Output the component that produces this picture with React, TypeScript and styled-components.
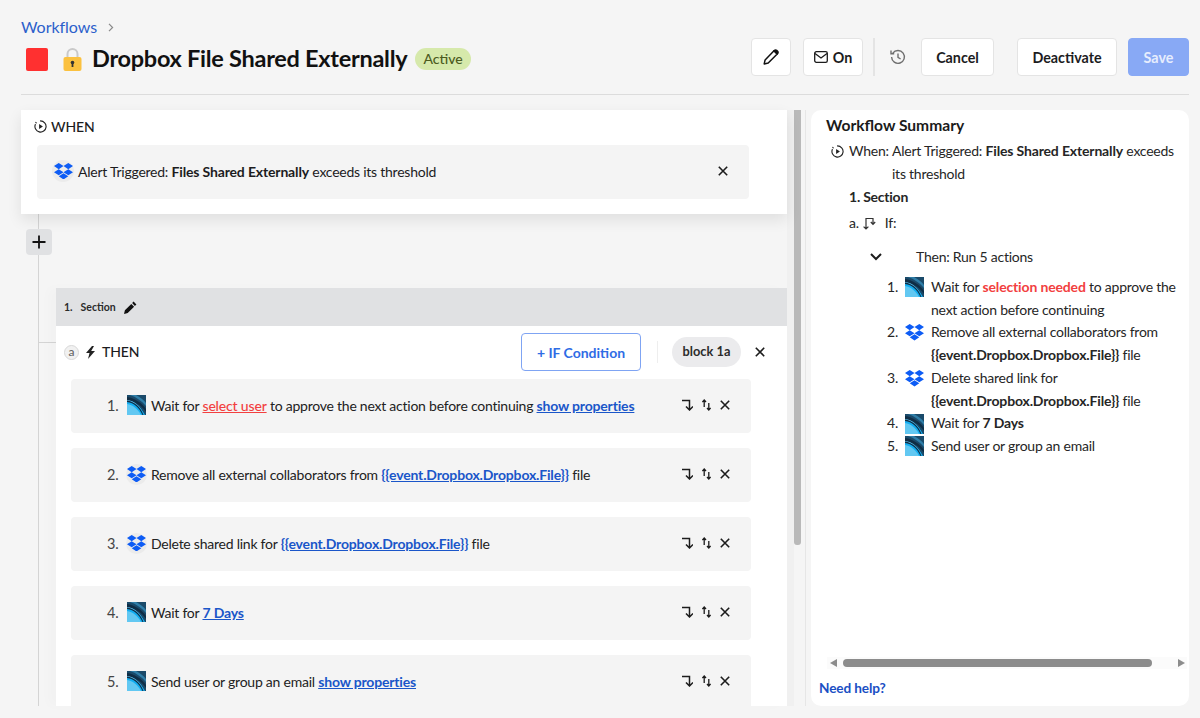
import React from "react";
import styled, { createGlobalStyle } from "styled-components";

const Global = createGlobalStyle`
  html, body { margin: 0; padding: 0; background: #f5f5f5; }
  body { font-family: Lato, "Liberation Sans", sans-serif; color: #1c1c1e; }
  * { box-sizing: border-box; }
  b { letter-spacing: -0.15px; }
`;

const Page = styled.div`
  width: 1200px;
  height: 718px;
  overflow: hidden;
  padding: 0 11px 0 21px;
  display: flex;
  flex-direction: column;
  letter-spacing: -0.24px;
`;
const Header = styled.header`
  height: 95px;
  border-bottom: 1px solid #dcdcdc;
  display: flex;
  justify-content: space-between;
  align-items: flex-start;
`;
const TitleBlock = styled.div`
  display: flex;
  flex-direction: column;
  padding-top: 17px;
`;
const Crumb = styled.div`
  display: flex;
  align-items: center;
  gap: 11px;
  font-size: 16px;
  line-height: 20px;
  letter-spacing: -0.05px;
  color: #2c5fcb;
`;
const TitleRow = styled.div`
  display: flex;
  align-items: center;
  margin-top: 7px;
  height: 30px;
`;
const RedSquare = styled.span`
  width: 22px;
  height: 23px;
  margin-left: 5px;
  background: #ff3030;
  border-radius: 2px;
`;
const LockIcon = styled.span`
  display: flex;
  margin-left: 15px;
  margin-right: 10px;
`;
const Title = styled.h1`
  margin: 0;
  padding-bottom: 2px;
  font-size: 23.5px;
  font-weight: 700;
  color: #111;
  line-height: 30px;
  letter-spacing: -0.27px;
`;
const Badge = styled.span`
  margin-left: 8px;
  height: 22px;
  line-height: 21px;
  padding: 0 8px;
  background: #d6e9ab;
  color: #4b5b1e;
  font-size: 14px;
  font-weight: 500;
  letter-spacing: 0;
  border-radius: 11px;
`;
const Actions = styled.div`
  display: flex;
  align-items: center;
  padding-top: 38px;
`;
const Btn = styled.button<{ $w: number; $ml?: number; $primary?: boolean }>`
  width: ${(p) => p.$w}px;
  margin-left: ${(p) => p.$ml ?? 0}px;
  height: 38px;
  display: flex;
  align-items: center;
  justify-content: center;
  gap: 5px;
  padding: 0;
  font-family: inherit;
  font-size: 14.3px;
  font-weight: 700;
  color: ${(p) => (p.$primary ? "#e6edfd" : "#1c1c1e")};
  background: ${(p) => (p.$primary ? "#88a9f5" : "#fff")};
  border: 1px solid ${(p) => (p.$primary ? "#88a9f5" : "#e4e4e4")};
  border-radius: 4px;
`;
const VSep = styled.span`
  width: 2px;
  height: 38px;
  margin-left: 10px;
  background: #e4e4e4;
`;
const HistoryWrap = styled.span`
  display: flex;
  width: 46px;
  justify-content: center;
  color: #6f6f6f;
`;

const Body = styled.main`
  flex: 1;
  min-height: 0;
  display: flex;
  padding-top: 15px;
  padding-bottom: 12px;
`;
const LeftCol = styled.div`
  width: 766px;
  position: relative;
  display: flex;
  flex-direction: column;
`;
const Rail = styled.span`
  position: absolute;
  left: 17px;
  top: 104px;
  bottom: 0;
  width: 1px;
  background: #d4d4d4;
`;
const RailBranch = styled.span`
  position: absolute;
  left: 17px;
  top: 232px;
  width: 18px;
  height: 1px;
  background: #d4d4d4;
`;
const WhenCard = styled.section`
  position: relative;
  height: 104px;
  padding: 7px 16px 0;
  background: #fff;
  box-shadow: 0 6px 14px rgba(0, 0, 0, 0.09);
`;
const WhenLabel = styled.div`
  display: flex;
  align-items: center;
  gap: 4px;
  height: 18px;
  margin-left: -3px;
  font-size: 14px;
  font-weight: 500;
  letter-spacing: -0.1px;
`;
const WhenRow = styled.div`
  margin-top: 10px;
  height: 54px;
  width: 712px;
  display: flex;
  align-items: center;
  padding: 0 21px 2px 15px;
  background: #f4f4f4;
  border-radius: 4px;
  font-size: 14px;
`;
const IconDisc = styled.span`
  width: 22px;
  height: 22px;
  display: flex;
  align-items: center;
  justify-content: center;
  border-radius: 50%;
  background: #ebebeb;
  margin-right: 4px;
  flex: none;
`;
const RowText = styled.span`
  flex: 1;
  white-space: nowrap;
`;
const AddBtn = styled.button`
  position: relative;
  width: 26px;
  height: 26px;
  margin: 15px 0 0 5px;
  padding: 0;
  display: flex;
  align-items: center;
  justify-content: center;
  border: 0;
  background: #e0e1e3;
  border-radius: 4px;
`;
const SectionBlock = styled.section`
  position: relative;
  flex: 1;
  min-height: 0;
  margin: 33px 0 0 35px;
  display: flex;
  flex-direction: column;
  overflow: hidden;
  box-shadow: -8px 0 10px rgba(0, 0, 0, 0.015);
`;
const SectionHead = styled.div`
  flex: none;
  height: 38px;
  display: flex;
  align-items: center;
  gap: 8px;
  padding-left: 8px;
  background: #e0e1e3;
  font-size: 10.5px;
  font-weight: 700;
  letter-spacing: 0;
  color: #2b2b2b;
`;
const ThenCard = styled.div`
  flex: 1;
  background: #fff;
  padding: 7px 36px 0 15px;
`;
const ThenBar = styled.div`
  height: 38px;
  margin-left: -7px;
  margin-right: -14px;
  display: flex;
  align-items: center;
  font-size: 14px;
  font-weight: 500;
  letter-spacing: -0.1px;
`;
const Letter = styled.span`
  width: 15px;
  height: 15px;
  margin-right: 6px;
  border: 1px solid #d8d8d8;
  background: #f1f1f1;
  border-radius: 50%;
  font-size: 12px;
  line-height: 12px;
  text-align: center;
  color: #666;
`;
const ThenLabel = styled.span`
  margin-left: 6px;
  padding-bottom: 2px;
  flex: 1;
`;
const IfBtn = styled.button`
  width: 120px;
  height: 38px;
  background: #fff;
  border: 1px solid #7fa4f3;
  border-radius: 4px;
  color: #2f6ce5;
  font-family: inherit;
  font-size: 14px;
  font-weight: 700;
  padding: 0;
`;
const ThinSep = styled.span`
  width: 1px;
  height: 22px;
  margin: 0 14px 0 16px;
  background: #eeeeee;
`;
const Pill = styled.span`
  width: 69px;
  height: 30px;
  line-height: 29px;
  text-align: center;
  background: #ebebed;
  border-radius: 15px;
  font-size: 12.8px;
  font-weight: 700;
  letter-spacing: 0;
  color: #2b2b2b;
`;
const CloseWrap = styled.span`
  display: flex;
  margin-left: 14px;
`;
const Steps = styled.div`
  margin-top: 8px;
  display: flex;
  flex-direction: column;
  gap: 15px;
`;
const Step = styled.div`
  flex: none;
  height: 54px;
  display: flex;
  align-items: center;
  padding: 0 21px 2px 36px;
  background: #f4f4f4;
  border-radius: 4px;
  font-size: 14px;
  color: #222;
`;
const StepNo = styled.span`
  width: 19px;
  font-size: 14.5px;
  color: #444;
`;
const StepIcon = styled.span`
  width: 21px;
  height: 22px;
  display: flex;
  align-items: center;
  justify-content: center;
  margin-right: 4px;
  flex: none;
`;
const StepDisc = styled.span`
  width: 21px;
  height: 21px;
  display: flex;
  align-items: center;
  justify-content: center;
  border-radius: 50%;
  background: #ebebeb;
`;
const StepTools = styled.span`
  display: flex;
  align-items: center;
  gap: 9px;
`;
const Link = styled.a<{ $red?: boolean }>`
  color: ${(p) => (p.$red ? "#f24040" : "#1a56c9")};
  font-weight: ${(p) => (p.$red ? 500 : 700)};
  letter-spacing: -0.17px;
  text-decoration: underline;
`;
const ScrollGutter = styled.div`
  width: 24px;
  flex: none;
  display: flex;
`;
const ScrollTrack = styled.span`
  width: 7px;
  background: #f0f0f0;
`;
const ScrollThumb = styled.span`
  width: 7px;
  height: 435px;
  background: #b9b9b9;
  border-radius: 0 0 3px 3px;
`;
const GutterLine = styled.span`
  width: 1px;
  margin-left: 4px;
  background: #e6e6e6;
`;
const Summary = styled.aside`
  width: 378px;
  flex: none;
  background: #fff;
  border-radius: 10px;
  padding: 5px 0 0 0;
  display: flex;
  flex-direction: column;
`;
const SummaryTitle = styled.h2`
  margin: 0 0 0 15px;
  font-size: 15.6px;
  line-height: 20px;
  font-weight: 700;
  letter-spacing: 0;
  color: #1b1b1b;
`;
const SummaryBody = styled.div`
  flex: 1;
  font-size: 14px;
  line-height: 22.5px;
  color: #262626;
`;
const WhenLine = styled.div`
  display: flex;
  margin: 5px 0 0 20px;
`;
const WhenIcon = styled.span`
  width: 18px;
  height: 22.5px;
  display: flex;
  align-items: center;
`;
const WhenWord = styled.span`
  width: 43px;
  flex: none;
`;
const WhenText = styled.span`
  width: 288px;
`;
const SectionLine = styled.div`
  margin: 0 0 0 38px;
  padding-top: 1px;
  font-weight: 700;
`;
const IfLine = styled.div`
  margin: 3.5px 0 0 38px;
  display: flex;
  align-items: center;
  gap: 3px;
  height: 22.5px;
`;
const IfWord = styled.span`
  margin-left: 5px;
`;
const ThenLine = styled.div`
  margin: 11.5px 0 0 59px;
  display: flex;
  align-items: center;
`;
const ThenText = styled.span`
  margin-left: 34px;
`;
const SumList = styled.ol`
  list-style: none;
  margin: 7.5px 0 0 76px;
  padding: 0;
  display: flex;
  flex-direction: column;
  line-height: 22.7px;
`;
const SumItem = styled.li`
  display: flex;
  width: 291px;
`;
const SumNo = styled.span`
  width: 18px;
  flex: none;
`;
const SumIcon = styled.span`
  width: 19px;
  height: 22.7px;
  flex: none;
  margin-right: 7px;
  display: flex;
  align-items: center;
  justify-content: center;
`;
const Red = styled.b`
  color: #f24040;
`;
const HScroll = styled.div`
  height: 12px;
  margin: 0 2px 0 16px;
  display: flex;
  align-items: center;
  gap: 6px;
  background: #fbfbfb;
`;
const HThumb = styled.span`
  width: 309px;
  height: 8px;
  border-radius: 4px;
  background: #8c8c8c;
`;
const Arrow = styled.span<{ $right?: boolean }>`
  width: 0;
  height: 0;
  border-top: 4px solid transparent;
  border-bottom: 4px solid transparent;
  ${(p) => (p.$right ? "border-left: 7px solid #8c8c8c; margin-left: 20px;" : "border-right: 7px solid #8c8c8c; margin-left: 3px;")}
`;
const Help = styled.a`
  margin: 10px 0 9px 8px;
  font-size: 13.6px;
  line-height: 18px;
  font-weight: 700;
  letter-spacing: -0.1px;
  color: #1a4fc4;
`;

const Dropbox = ({ s = 19 }: { s?: number }) => (
  <svg width={s} height={s * 0.88} viewBox="0 0 25 22" fill="#0d5cf5">
    <path d="M6.2 0 0 4.1l6.2 4L12.5 4.1zM18.8 0l-6.3 4.1 6.3 4 6.2-4zM0 12.2l6.2 4 6.3-4-6.3-4.1zM18.8 8.1l-6.3 4.1 6.3 4 6.2-4zM6.3 17.5l6.2 4.1 6.3-4.1-6.3-4z" />
  </svg>
);
const Brand = () => (
  <svg width="19" height="20" viewBox="0 0 19 20">
    <rect width="19" height="20" fill="#1a4a6a" />
    <path d="M3 0H9C13 2 17 5 19 8V11C15 6 9 2 3 0Z" fill="#2f7ea8" />
    <path d="M0 2C8 3 15 8 19 14V17C15 11 8 6 0 5Z" fill="#0f2d45" />
    <path d="M0 5C7 6 13 10 17 20H0Z" fill="#62c8f2" />
    <path d="M0 6C7 7 14 12 18 20H14C11 14 6 10 0 9Z" fill="#12aef2" />
    <path d="M0 5.5C7 6.5 13 11 16.5 20H15.5C12 12 7 8 0 7Z" fill="#0f2d45" />
  </svg>
);
const X = ({ s = 10, w = 1.6 }: { s?: number; w?: number }) => (
  <svg width={s} height={s} viewBox="0 0 10 10" stroke="#1c1c1c" strokeWidth={w} fill="none">
    <path d="M.8.8l8.4 8.4M9.2.8.8 9.2" />
  </svg>
);
const Pencil = ({ s = 16 }: { s?: number }) => (
  <svg width={s} height={s} viewBox="0 0 16 16" fill="none" stroke="#111" strokeWidth="1.5" strokeLinejoin="round">
    <path d="M11 1.8 14.2 5 5.2 14l-4 .9.9-4z" />
    <path d="M11 1.8c1-1 2-1 2.6-.4l1 1c.6.6.6 1.6-.4 2.6z" fill="#111" />
  </svg>
);
const PlayCircle = () => (
  <svg width="13" height="13" viewBox="0 0 14 14" fill="none" stroke="#222" strokeWidth="1.2">
    <path d="M7 1a6 6 0 1 1-5.6 3.9" strokeLinecap="round" />
    <path d="M1.9 2.6l.5.5" strokeLinecap="round" />
    <path d="M5.5 4.4 9.6 7l-4.1 2.6z" fill="#222" stroke="none" />
  </svg>
);
const StepTool = () => (
  <StepTools>
    <svg width="11" height="12" viewBox="0 0 11 12" fill="none" stroke="#1c1c1c" strokeWidth="1.5">
      <path d="M0 1.5H7.5v9M4 7.5 7.5 11 11 7.5" />
    </svg>
    <svg width="9" height="12" viewBox="0 0 9 12" fill="none" stroke="#1c1c1c" strokeWidth="1.3">
      <path d="M2.2 8V1.2M.4 3 2.2 1 4 3M6.8 4v6.8M5 9l1.8 2 1.8-2" />
    </svg>
    <X />
  </StepTools>
);

const stepData: { icon: React.ReactNode; body: React.ReactNode }[] = [
  {
    icon: <Brand />,
    body: (
      <>
        Wait for <Link $red>select user</Link> to approve the next action before continuing <Link>show properties</Link>
      </>
    ),
  },
  {
    icon: <StepDisc><Dropbox /></StepDisc>,
    body: (
      <>
        Remove all external collaborators from <Link>{"{{event.Dropbox.Dropbox.File}}"}</Link> file
      </>
    ),
  },
  {
    icon: <StepDisc><Dropbox /></StepDisc>,
    body: (
      <>
        Delete shared link for <Link>{"{{event.Dropbox.Dropbox.File}}"}</Link> file
      </>
    ),
  },
  {
    icon: <Brand />,
    body: (
      <>
        Wait for <Link>7 Days</Link>
      </>
    ),
  },
  {
    icon: <Brand />,
    body: (
      <>
        Send user or group an email <Link>show properties</Link>
      </>
    ),
  },
];

const sumData: { icon: React.ReactNode; body: React.ReactNode }[] = [
  {
    icon: <Brand />,
    body: (
      <>
        Wait for <Red>selection needed</Red> to approve the next action before continuing
      </>
    ),
  },
  {
    icon: <Dropbox />,
    body: (
      <>
        Remove all external collaborators from <b>{"{{event.Dropbox.Dropbox.File}}"}</b> file
      </>
    ),
  },
  {
    icon: <Dropbox />,
    body: (
      <>
        Delete shared link for <b>{"{{event.Dropbox.Dropbox.File}}"}</b> file
      </>
    ),
  },
  {
    icon: <Brand />,
    body: (
      <>
        Wait for <b>7 Days</b>
      </>
    ),
  },
  { icon: <Brand />, body: <>Send user or group an email</> },
];

export default function App() {
  return (
    <Page>
      <Global />
      <Header>
        <TitleBlock>
          <Crumb>
            Workflows
            <svg width="6" height="9" viewBox="0 0 6 9" fill="none" stroke="#8a8a8a" strokeWidth="1.2">
              <path d="M1 .8l3.6 3.7L1 8.2" />
            </svg>
          </Crumb>
          <TitleRow>
            <RedSquare />
            <LockIcon>
              <svg width="19" height="23" viewBox="0 0 19 23">
                <path d="M4.5 10V6a5 5 0 0 1 10 0V10" fill="none" stroke="#c9c9c9" strokeWidth="2" />
                <rect x="0.5" y="9" width="18" height="14" rx="2" fill="#fbc13f" />
                <circle cx="9.5" cy="14.5" r="1.8" fill="#333" />
                <rect x="8.6" y="15" width="1.8" height="4" fill="#333" />
              </svg>
            </LockIcon>
            <Title>Dropbox File Shared Externally</Title>
            <Badge>Active</Badge>
          </TitleRow>
        </TitleBlock>
        <Actions>
          <Btn $w={40}>
            <Pencil s={16} />
          </Btn>
          <Btn $w={60} $ml={12}>
            <svg width="14" height="12" viewBox="0 0 14 12" fill="none" stroke="#1c1c1c" strokeWidth="1.3">
              <rect x=".7" y=".7" width="12.6" height="10.6" rx="1.6" />
              <path d="M1 2.5 7 7l6-4.5" />
            </svg>
            On
          </Btn>
          <VSep />
          <HistoryWrap>
            <svg width="16" height="16" viewBox="0 0 16 16" fill="none" stroke="currentColor" strokeWidth="1.4">
              <path d="M2.8 4.2A6.4 6.4 0 1 1 1.6 8" />
              <path d="M1 1.6v3.2h3.2" />
              <path d="M8 4.6V8.4l2.6 1.6" />
            </svg>
          </HistoryWrap>
          <Btn $w={73}>Cancel</Btn>
          <Btn $w={100} $ml={23}>Deactivate</Btn>
          <Btn $w={61} $ml={11} $primary>Save</Btn>
        </Actions>
      </Header>
      <Body>
        <LeftCol>
          <Rail />
          <RailBranch />
          <WhenCard>
            <WhenLabel>
              <PlayCircle />
              WHEN
            </WhenLabel>
            <WhenRow>
              <IconDisc>
                <Dropbox />
              </IconDisc>
              <RowText>
                Alert Triggered: <b>Files Shared Externally</b> exceeds its threshold
              </RowText>
              <X />
            </WhenRow>
          </WhenCard>
          <AddBtn aria-label="Add">
            <svg width="14" height="14" viewBox="0 0 14 14" stroke="#111" strokeWidth="1.8">
              <path d="M7 .5v13M.5 7h13" />
            </svg>
          </AddBtn>
          <SectionBlock>
            <SectionHead>
              <span>1.</span>
              <span>Section</span>
              <svg width="13" height="13" viewBox="0 0 13 13" fill="#111">
                <path d="M9.6.6l2.8 2.8-1.5 1.5L8.1 2.1zM7.3 2.9l2.8 2.8-6.4 6.4L0 13l.9-3.7z" />
              </svg>
            </SectionHead>
            <ThenCard>
              <ThenBar>
                <Letter>a</Letter>
                <svg width="11" height="13" viewBox="0 0 11 13" fill="#222">
                  <path d="M7 0 1 7h3.5L3 13l7-8H6.2L9 0z" />
                </svg>
                <ThenLabel>THEN</ThenLabel>
                <IfBtn>+ IF Condition</IfBtn>
                <ThinSep />
                <Pill>block 1a</Pill>
                <CloseWrap>
                  <X />
                </CloseWrap>
              </ThenBar>
              <Steps>
                {stepData.map((s, i) => (
                  <Step key={i}>
                    <StepNo>{i + 1}.</StepNo>
                    <StepIcon>{s.icon}</StepIcon>
                    <RowText>{s.body}</RowText>
                    <StepTool />
                  </Step>
                ))}
              </Steps>
            </ThenCard>
          </SectionBlock>
        </LeftCol>
        <ScrollGutter>
          <ScrollTrack />
          <ScrollThumb />
          <GutterLine />
        </ScrollGutter>
        <Summary>
          <SummaryTitle>Workflow Summary</SummaryTitle>
          <SummaryBody>
            <WhenLine>
              <WhenIcon>
                <PlayCircle />
              </WhenIcon>
              <WhenWord>When:</WhenWord>
              <WhenText>
                Alert Triggered: <b>Files Shared Externally</b> exceeds its threshold
              </WhenText>
            </WhenLine>
            <SectionLine>1. Section</SectionLine>
            <IfLine>
              a.
              <svg width="15" height="13" viewBox="0 0 15 13" fill="none" stroke="#333" strokeWidth="1.2">
                <path d="M4 12V1.5h7V7M1.6 9.6 4 12l2.4-2.4M8.8 5l2.2 2.4L13.2 5" />
              </svg>
              <IfWord>If:</IfWord>
            </IfLine>
            <ThenLine>
              <svg width="12" height="8" viewBox="0 0 12 8" fill="none" stroke="#1c1c1c" strokeWidth="2">
                <path d="M1 1l5 5 5-5" />
              </svg>
              <ThenText>Then: Run 5 actions</ThenText>
            </ThenLine>
            <SumList>
              {sumData.map((s, i) => (
                <SumItem key={i}>
                  <SumNo>{i + 1}.</SumNo>
                  <SumIcon>{s.icon}</SumIcon>
                  <span>{s.body}</span>
                </SumItem>
              ))}
            </SumList>
          </SummaryBody>
          <HScroll>
            <Arrow />
            <HThumb />
            <Arrow $right />
          </HScroll>
          <Help>Need help?</Help>
        </Summary>
      </Body>
    </Page>
  );
}
